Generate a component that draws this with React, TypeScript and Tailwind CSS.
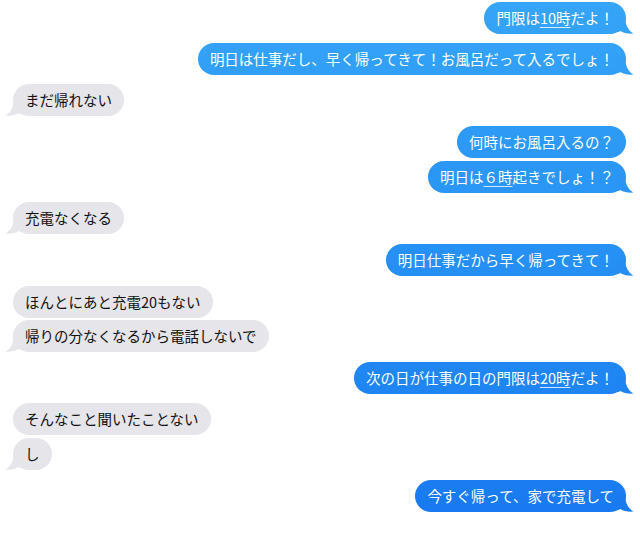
import React from "react";

type Msg = { me: boolean; content: React.ReactNode; tail: boolean; mt: number };

const U = ({ children }: { children: React.ReactNode }) => (
  <span className="underline decoration-white/80 decoration-1 underline-offset-[3px]">{children}</span>
);

const msgs: Msg[] = [
  { me: true, content: <>門限は<U>10時</U>だよ！</>, tail: true, mt: 0 },
  { me: true, content: <>明日は仕事だし、早く帰ってきて！お風呂だって入るでしょ！</>, tail: true, mt: 9 },
  { me: false, content: <>まだ帰れない</>, tail: true, mt: 9 },
  { me: true, content: <>何時にお風呂入るの？</>, tail: false, mt: 10 },
  { me: true, content: <>明日は<U>６時</U>起きでしょ！？</>, tail: true, mt: 3 },
  { me: false, content: <>充電なくなる</>, tail: true, mt: 9 },
  { me: true, content: <>明日仕事だから早く帰ってきて！</>, tail: true, mt: 10 },
  { me: false, content: <>ほんとにあと充電20もない</>, tail: false, mt: 10 },
  { me: false, content: <>帰りの分なくなるから電話しないで</>, tail: true, mt: 2 },
  { me: true, content: <>次の日が仕事の日の門限は<U>20時</U>だよ！</>, tail: true, mt: 10 },
  { me: false, content: <>そんなこと聞いたことない</>, tail: false, mt: 9 },
  { me: false, content: <>し</>, tail: true, mt: 3 },
  { me: true, content: <>今すぐ帰って、家で充電して</>, tail: true, mt: 10 },
];

const TOP = [54, 165, 247];
const BOT = [23, 120, 240];
const H = 535;

function blueAt(y: number) {
  const t = Math.max(0, Math.min(1, y / H));
  const c = TOP.map((v, i) => Math.round(v + (BOT[i] - v) * t));
  return `rgb(${c[0]},${c[1]},${c[2]})`;
}

const tailPath = "M0,0 H8 C8,8 11,14.5 16.5,17.6 C11.5,18.2 6.5,17 3.5,15 C2.5,15.6 1,16 0,16 Z";

export default function App() {
  let y = 2;
  return (
    <div
      className="w-[640px] h-[535px] bg-white overflow-hidden flex flex-col pt-[2px] pl-[13px] pr-[14px] text-[14.5px]"
      style={{ fontFamily: '"Noto Sans CJK JP", "Noto Sans", sans-serif' }}
    >
      {msgs.map((m, i) => {
        y += m.mt;
        const bottom = y + 32;
        y = bottom;
        const tailColor = m.me ? blueAt(bottom - 4) : "#e5e5ea";
        return (
          <div key={i} className={`flex ${m.me ? "justify-end" : "justify-start"}`} style={{ marginTop: m.mt }}>
            <div
              className={`relative h-8 flex items-center px-3 rounded-[16px] leading-[20px] whitespace-nowrap ${
                m.me
                  ? "text-white bg-linear-to-b from-[#36a5f7] to-[#1778f0] bg-fixed"
                  : "text-[#111111] bg-[#e5e5ea]"
              }`}
            >
              <span className="relative z-10">{m.content}</span>
              {m.tail && (
                <svg
                  width="18"
                  height="18"
                  viewBox="0 0 18 18"
                  className={`absolute bottom-0 ${m.me ? "right-[-9px]" : "left-[-9px] -scale-x-100"}`}
                >
                  <path d={tailPath} fill={tailColor} />
                </svg>
              )}
            </div>
          </div>
        );
      })}
    </div>
  );
}
